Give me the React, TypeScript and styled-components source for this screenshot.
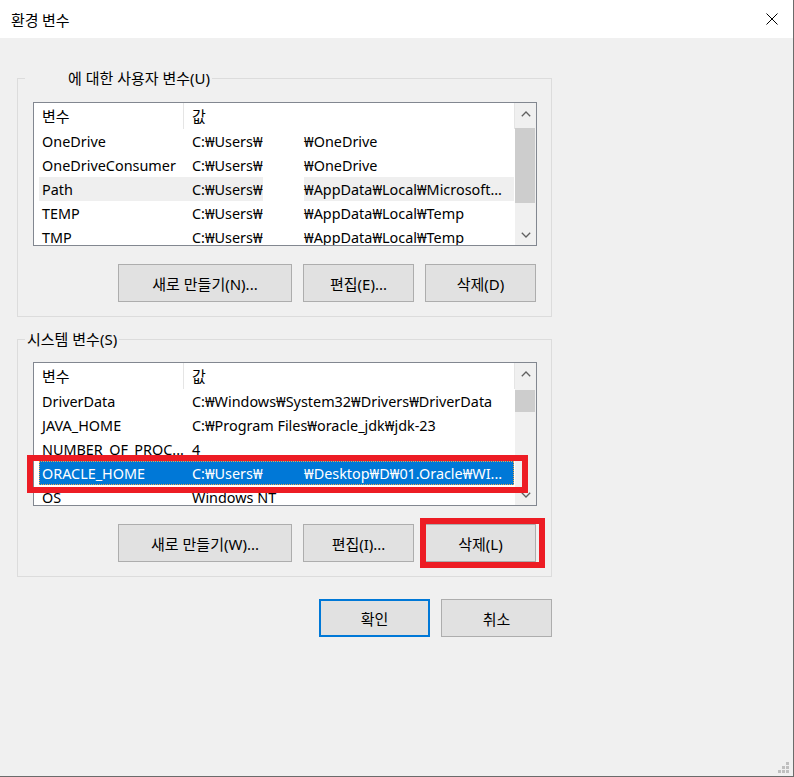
import React from "react";
import styled, { createGlobalStyle } from "styled-components";

const GlobalStyle = createGlobalStyle`
  html, body { margin: 0; padding: 0; background: #f0f0f0; }
  body {
    font-family: "Noto Sans", "Noto Sans CJK KR", sans-serif;
    font-size: 15px;
    color: #000;
  }
  * { box-sizing: border-box; }
`;

const Window = styled.div`
  position: relative;
  width: 794px;
  height: 777px;
  background: #f0f0f0;
  border-right: 1px solid #6b6b6b;
  border-bottom: 1px solid #6b6b6b;
  display: flex;
  flex-direction: column;
  overflow: hidden;
`;

const TitleBar = styled.div`
  height: 38px;
  flex: none;
  background: #fff;
  display: flex;
  align-items: center;
  justify-content: space-between;
  padding: 0 15px 0 11px;
`;

const Title = styled.div`
  font-family: "Noto Sans CJK KR", sans-serif;
  font-size: 15px;
  line-height: 20px;
  padding-top: 1px;
`;

const CloseBtn = styled.div`
  width: 12px;
  height: 12px;
  display: flex;
`;

const Body = styled.div`
  display: flex;
  flex-direction: column;
  padding: 40px 0 0 17px;
`;

const Group = styled.div<{ $pt: number; $mt: number }>`
  position: relative;
  width: 535px;
  margin-top: ${(p) => p.$mt}px;
  border: 1px solid #dcdcdc;
  padding: ${(p) => p.$pt}px 14px 14px 15px;
  display: flex;
  flex-direction: column;
`;

const Legend = styled.div`
  position: absolute;
  top: -11px;
  left: 7px;
  height: 20px;
  line-height: 20px;
  padding: 0 2px;
  background: #f0f0f0;
  display: flex;
  align-items: center;
  white-space: nowrap;
`;

const Spacer = styled.span<{ $w: number }>`
  display: inline-block;
  width: ${(p) => p.$w}px;
`;

const List = styled.div`
  width: 504px;
  height: 144px;
  border: 1px solid #828790;
  background: #fff;
  display: flex;
  overflow: hidden;
`;

const ListContent = styled.div`
  flex: 1;
  min-width: 0;
  display: flex;
  flex-direction: column;
  overflow: hidden;
`;

const Header = styled.div`
  flex: none;
  height: 26px;
  display: grid;
  grid-template-columns: 150px 1fr;
`;

const HeaderCell = styled.div`
  border-right: 1px solid #e5e5e5;
  padding-left: 8px;
  line-height: 26px;
  font-family: "Noto Sans CJK KR", sans-serif;
  font-size: 15px;
  white-space: nowrap;
`;

const Row = styled.div<{ $state?: "hover" | "sel" }>`
  flex: none;
  height: 24px;
  margin: 0 1px 0 5px;
  display: grid;
  grid-template-columns: 145px 1fr;
  align-items: stretch;
  font-size: 14.4px;
  background: ${(p) =>
    p.$state === "sel" ? "#0078d7" : p.$state === "hover" ? "#efefef" : "#fff"};
  color: ${(p) => (p.$state === "sel" ? "#fff" : "#000")};
  outline: ${(p) => (p.$state === "sel" ? "1px dotted #f0a848" : "none")};
  outline-offset: -1px;
`;

const Cell = styled.div<{ $pl: number }>`
  padding-left: ${(p) => p.$pl}px;
  padding-top: 1px;
  white-space: nowrap;
  overflow: hidden;
  line-height: 23px;
  display: flex;
`;

const Head = styled.div`
  width: 112px;
  flex: none;
  display: flex;
`;

const Filler = styled.span<{ $sel?: boolean }>`
  flex: 1;
  margin-top: -1px;
  align-self: stretch;
  background: ${(p) => (p.$sel ? "transparent" : "#fff")};
`;

const ScrollBar = styled.div`
  width: 21px;
  flex: none;
  background: #f0f0f0;
  display: flex;
  flex-direction: column;
`;

const Arrow = styled.div`
  height: 21px;
  flex: none;
  display: flex;
  align-items: center;
  justify-content: center;
`;

const Track = styled.div`
  flex: 1;
  display: flex;
  flex-direction: column;
`;

const Thumb = styled.div`
  background: #cdcdcd;
  margin: 0 1px 0 0;
`;

const ButtonRow = styled.div<{ $gap: number; $mt: number }>`
  display: flex;
  justify-content: flex-end;
  gap: ${(p) => p.$gap}px;
  margin-top: ${(p) => p.$mt}px;
  padding-right: 1px;
`;

const Button = styled.div<{ $w: number; $primary?: boolean }>`
  width: ${(p) => p.$w}px;
  height: 38px;
  background: #e1e1e1;
  border: ${(p) => (p.$primary ? "2px solid #0078d7" : "1px solid #adadad")};
  display: flex;
  align-items: center;
  justify-content: center;
  white-space: nowrap;
  font-size: 15px;
`;

const Footer = styled.div`
  width: 535px;
  margin-top: 22px;
  display: flex;
  justify-content: flex-end;
  gap: 11px;
`;

const Mark = styled.div<{ $x: number; $y: number; $w: number; $h: number }>`
  position: absolute;
  left: ${(p) => p.$x}px;
  top: ${(p) => p.$y}px;
  width: ${(p) => p.$w}px;
  height: ${(p) => p.$h}px;
  border: 6px solid #ed1c24;
  pointer-events: none;
`;

const Grip = styled.div`
  position: absolute;
  right: 4px;
  bottom: 3px;
  width: 12px;
  height: 12px;
  display: flex;
`;

type Item = {
  name: string;
  value: string;
  rest?: string;
  state?: "hover" | "sel";
};

const userVars: Item[] = [
  { name: "OneDrive", value: "C:₩Users₩", rest: "₩OneDrive" },
  { name: "OneDriveConsumer", value: "C:₩Users₩", rest: "₩OneDrive" },
  { name: "Path", value: "C:₩Users₩", rest: "₩AppData₩Local₩Microsoft...", state: "hover" },
  { name: "TEMP", value: "C:₩Users₩", rest: "₩AppData₩Local₩Temp" },
  { name: "TMP", value: "C:₩Users₩", rest: "₩AppData₩Local₩Temp" },
];

const sysVars: Item[] = [
  { name: "DriverData", value: "C:₩Windows₩System32₩Drivers₩DriverData" },
  { name: "JAVA_HOME", value: "C:₩Program Files₩oracle_jdk₩jdk-23" },
  { name: "NUMBER_OF_PROC...", value: "4" },
  { name: "ORACLE_HOME", value: "C:₩Users₩", rest: "₩Desktop₩D₩01.Oracle₩WI...", state: "sel" },
  { name: "OS", value: "Windows NT" },
];

const Chevron = ({ up }: { up?: boolean }) => (
  <svg width="10" height="6" viewBox="0 0 10 6">
    <polyline
      points={up ? "0.8,5.2 5,1 9.2,5.2" : "0.8,0.8 5,5 9.2,0.8"}
      fill="none"
      stroke="#606060"
      strokeWidth="1.3"
    />
  </svg>
);

const VarList = ({
  items,
  thumbTop,
  thumbH,
}: {
  items: Item[];
  thumbTop: number;
  thumbH: number;
}) => (
  <List>
    <ListContent>
      <Header>
        <HeaderCell>변수</HeaderCell>
        <HeaderCell>값</HeaderCell>
      </Header>
      {items.map((it) => (
        <Row key={it.name} $state={it.state}>
          <Cell $pl={3}>{it.name}</Cell>
          <Cell $pl={8}>
            {it.rest ? (
              <>
                <Head>
                  <span>{it.value}</span>
                  <Filler $sel={it.state === "sel"} />
                </Head>
                <span>{it.rest}</span>
              </>
            ) : (
              it.value
            )}
          </Cell>
        </Row>
      ))}
    </ListContent>
    <ScrollBar>
      <Arrow>
        <Chevron up />
      </Arrow>
      <Track>
        <Thumb style={{ marginTop: thumbTop, height: thumbH }} />
      </Track>
      <Arrow>
        <Chevron />
      </Arrow>
    </ScrollBar>
  </List>
);

export default function App() {
  return (
    <>
      <GlobalStyle />
      <Window>
        <TitleBar>
          <Title>환경 변수</Title>
          <CloseBtn>
            <svg width="12" height="12" viewBox="0 0 12 12">
              <path d="M0.5 0.5 L11.5 11.5 M11.5 0.5 L0.5 11.5" stroke="#000" strokeWidth="1" />
            </svg>
          </CloseBtn>
        </TitleBar>
        <Body>
          <Group $pt={23} $mt={0}>
            <Legend>
              <Spacer $w={41} />
              에 대한 사용자 변수(U)
            </Legend>
            <VarList items={userVars} thumbTop={4} thumbH={75} />
            <ButtonRow $gap={11} $mt={18}>
              <Button $w={174}>새로 만들기(N)...</Button>
              <Button $w={111}>편집(E)...</Button>
              <Button $w={111}>삭제(D)</Button>
            </ButtonRow>
          </Group>
          <Group $pt={22} $mt={22}>
            <Legend>시스템 변수(S)</Legend>
            <VarList items={sysVars} thumbTop={6} thumbH={22} />
            <ButtonRow $gap={11} $mt={18}>
              <Button $w={174}>새로 만들기(W)...</Button>
              <Button $w={111}>편집(I)...</Button>
              <Button $w={111}>삭제(L)</Button>
            </ButtonRow>
          </Group>
          <Footer>
            <Button $w={111} $primary>
              확인
            </Button>
            <Button $w={111}>취소</Button>
          </Footer>
        </Body>
        <Mark $x={27} $y={455} $w={501} $h={38} />
        <Mark $x={420} $y={518} $w={125} $h={50} />
        <Grip>
          <svg width="12" height="12" viewBox="0 0 12 12">
            <rect x="9" y="1" width="3" height="3" fill="#bfbfbf" />
            <rect x="5" y="5" width="3" height="3" fill="#bfbfbf" />
            <rect x="9" y="5" width="3" height="3" fill="#bfbfbf" />
            <rect x="1" y="9" width="3" height="3" fill="#bfbfbf" />
            <rect x="5" y="9" width="3" height="3" fill="#bfbfbf" />
            <rect x="9" y="9" width="3" height="3" fill="#bfbfbf" />
          </svg>
        </Grip>
      </Window>
    </>
  );
}
